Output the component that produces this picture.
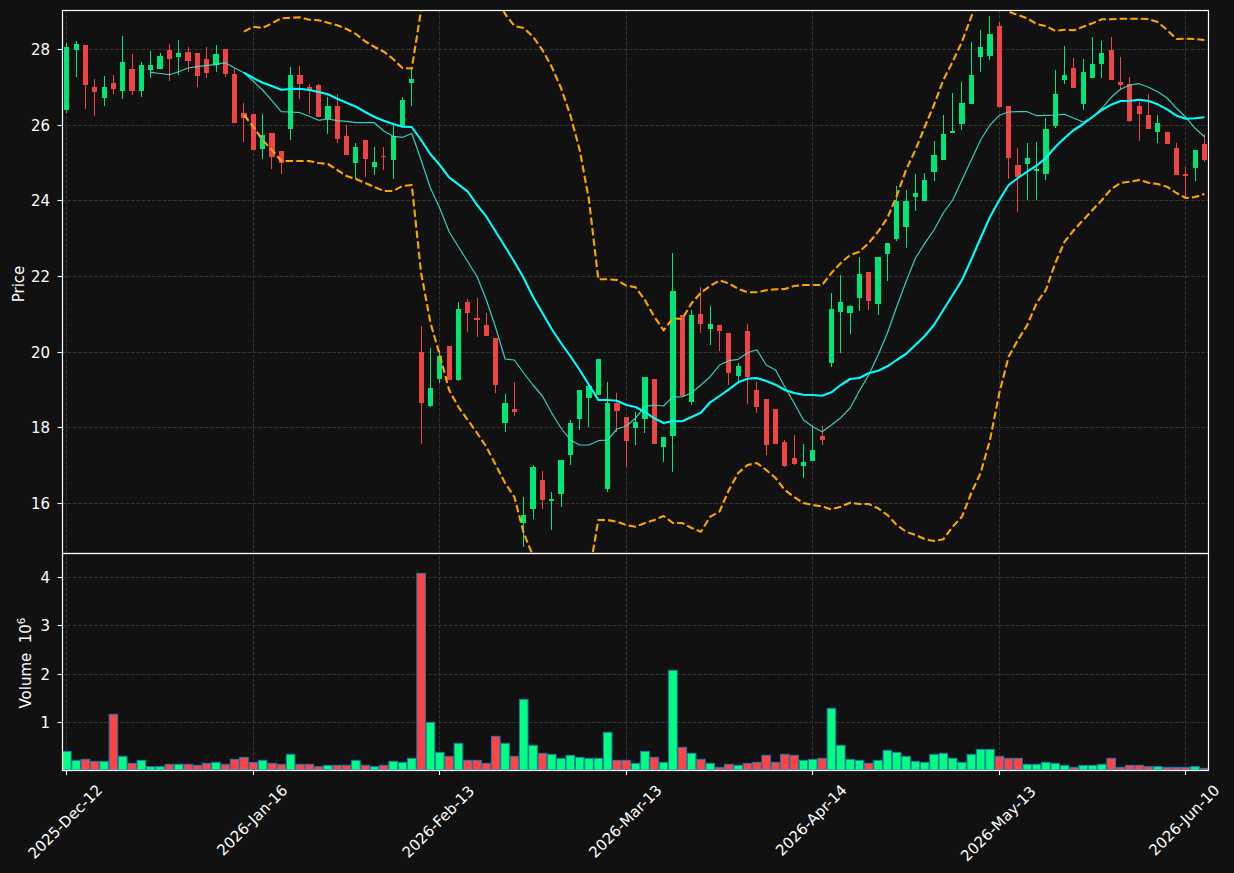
import React from 'react';

const X0 = 66.8;
const STEP = 9.325;
const GREEN = '#00e676';
const RED = '#ef4444';
const FONT = '"DejaVu Sans", sans-serif';

const cx = (i: number) => X0 + i * STEP;

// Everything below is read off in screen pixels: [wick top, body top, body bottom, wick bottom, up?]
type Candle = [number, number, number, number, 0 | 1];

const candles: Candle[] = [
  [42.7, 47, 110, 112.7, 1], [41.3, 44, 50, 76.7, 1], [45, 45, 85, 109.3, 0], [79.3, 87, 92, 115.7, 0],
  [76.3, 87, 98, 105.7, 1], [75.3, 83, 89, 93.7, 0], [36.3, 62, 91, 99.3, 1], [54.3, 69, 91, 94.7, 0],
  [62, 65, 91, 97.3, 1], [51, 65, 70, 78.3, 1], [53.3, 56, 69, 69.3, 1], [44.3, 50, 59, 80.7, 0],
  [40.3, 53, 57, 75.3, 1], [47.3, 52, 61, 71.7, 0], [53, 53, 76, 87.3, 0], [47, 59, 73, 78.3, 0],
  [45.3, 54, 65, 72.3, 1], [49, 49, 74, 77.3, 0], [69.3, 74, 123, 123, 0], [103.3, 113, 118, 142.3, 0],
  [114, 114, 150, 150, 0], [114.3, 135, 149, 159.3, 1], [133, 133, 157, 169.3, 0], [151, 151, 163, 174.3, 0],
  [67.3, 75, 129, 140.3, 1], [66, 75, 84, 98.7, 0], [84.3, 87, 90, 114, 0], [84, 85, 117, 117, 0],
  [97, 106, 119, 134.3, 1], [94, 106, 139, 143.3, 0], [125, 136, 155, 155, 0], [143.3, 147, 163, 179, 1],
  [140, 140, 159, 176.7, 0], [147.3, 162, 167, 175.3, 1], [147.3, 156, 157, 170.3, 0], [125, 136, 160, 179.3, 1],
  [96.7, 100, 126.7, 127, 1], [69, 79, 83, 106.3, 1], [326, 352, 403, 444, 0], [348.3, 388, 406, 406.7, 1],
  [350, 356, 379, 383, 1], [346, 346, 380, 380, 0], [302.3, 309, 380, 380.7, 1], [299.3, 302, 313, 332, 0],
  [298.3, 318, 320, 336.7, 0], [313.3, 325, 336, 336, 0], [338, 338, 385, 392.7, 0], [394.3, 403, 423, 432, 1],
  [382.3, 409, 412, 415.7, 0], [497.3, 515, 523, 547.3, 1], [465.3, 467, 509, 518.7, 1], [471, 480, 500, 508.7, 0],
  [492.3, 499, 501, 530.3, 1], [460, 460, 494, 506.7, 1], [420, 423, 455, 465.3, 1], [390, 390, 419, 430, 1],
  [383, 386, 398, 427.3, 1], [359, 359, 395, 395, 1], [382.3, 403, 489, 492.3, 1], [393.3, 403, 411, 432.3, 0],
  [417, 417, 441, 466.7, 0], [412.3, 422, 428, 445.3, 1], [377, 377, 419, 433.3, 1], [379, 379, 444, 444.3, 0],
  [437, 437, 447, 462.3, 1], [253, 291, 436, 471.7, 1], [315, 315, 396, 396, 0], [310.3, 315, 402, 405, 1],
  [287.3, 314, 324, 333.3, 0], [306, 324, 329, 344.7, 1], [325, 325, 331, 350.7, 0], [333, 333, 373, 385, 0],
  [362.7, 366, 376, 381.3, 1], [324, 331, 377, 404.3, 0], [382.3, 390, 407, 413.3, 0], [399, 399, 445, 455.3, 0],
  [409, 409, 444, 444, 0], [440.3, 442, 466, 466.7, 0], [435.3, 458, 464, 465.3, 0], [444, 462, 466, 478.3, 1],
  [427.3, 450, 461, 461, 1], [425.7, 436, 440, 445.3, 0], [293.3, 309, 363, 367.3, 1], [275.3, 302, 312, 352.7, 1],
  [305, 306, 313, 334.3, 1], [257.3, 274, 298, 310.7, 1], [272, 272, 301, 309.7, 0], [257, 257, 304, 315.3, 1],
  [243, 243, 254, 280.7, 1], [186.3, 201, 239, 240.7, 1], [189.7, 201, 227, 247.5, 1], [174, 193, 197, 210.7, 1],
  [173, 180, 201, 201, 1], [141, 155, 172, 181, 1], [115, 134, 160, 160, 1], [93, 131, 133, 133, 1],
  [82, 103, 124, 130, 1], [42, 75, 104, 104, 1], [30, 47, 57, 72, 1], [16, 34, 56, 60, 1],
  [22, 26, 107, 107, 0], [106, 106, 158, 179, 0], [148, 165, 177, 212, 0], [143, 158, 164, 200, 1],
  [142, 169, 171, 200, 1], [118, 129, 174, 180, 1], [70, 94, 126, 128, 1], [46, 75, 80, 84, 1],
  [58, 68, 88, 88, 0], [59, 72, 104, 110, 1], [37, 64, 78, 78, 1], [41, 53, 64, 78, 1],
  [37, 50, 80, 80, 0], [57, 82, 85, 90, 0], [77, 84, 121, 122, 0], [102, 106, 114, 141, 0],
  [94, 115, 129, 129, 0], [115, 123, 132, 143, 1], [132, 132, 144, 144, 0], [143.3, 148, 175, 157, 0],
  [166.7, 174, 176, 199, 0], [150, 150, 168, 181, 1], [134, 144, 160, 162, 0],
];

// bar top as read from the 3x crops, colour
const volumes: [number, 0 | 1][] = [
  [604, 1], [631, 1], [628, 0], [634, 0], [634, 1], [493, 0], [619, 1], [640, 0], [631, 1], [650, 1],
  [650, 1], [643, 0], [643, 1], [643, 0], [646, 0], [640, 0], [637, 1], [643, 0], [628, 0], [622, 0],
  [637, 0], [631, 1], [640, 0], [643, 0], [613, 1], [643, 0], [643, 0], [650, 0], [646, 1], [646, 0],
  [646, 0], [631, 1], [646, 0], [650, 1], [646, 0], [634, 1], [637, 1], [625, 1], [70, 0], [517, 1],
  [607, 1], [619, 0], [580, 1], [631, 0], [631, 0], [640, 0], [559, 0], [580, 1], [619, 0], [448, 1],
  [586, 1], [610, 0], [613, 1], [625, 1], [616, 1], [622, 1], [625, 1], [625, 1], [547, 1], [631, 0],
  [631, 0], [640, 1], [604, 1], [622, 0], [637, 1], [361, 1], [592, 0], [610, 1], [628, 0], [640, 1],
  [652, 0], [643, 0], [646, 1], [640, 0], [637, 0], [616, 0], [637, 0], [613, 0], [616, 0], [631, 1],
  [628, 1], [625, 0], [475, 1], [586, 1], [628, 1], [631, 1], [640, 0], [631, 1], [601, 1], [607, 1],
  [619, 1], [634, 1], [637, 1], [613, 1], [610, 1], [625, 1], [637, 1], [613, 1], [598, 1], [598, 1],
  [619, 0], [625, 0], [625, 0], [643, 1], [643, 1], [637, 1], [640, 1], [646, 1], [652, 0], [646, 1],
  [646, 1], [643, 1], [625, 0], [652, 0], [646, 0], [646, 0], [650, 0], [650, 1], [652, 0], [652, 0],
  [652, 0], [650, 1], [655, 0],
];

// Upper band, idx 19 onward (goes off the top of the axes around Feb and May)
const upper = [
  31.7, 26.7, 28, 23.3, 18.3, 17.7, 17.3, 19.7, 20.3, 22.7, 25.3, 29, 34, 41.3, 47, 51.7, 59, 68, 68.5,
  10, -50, -90, -110, -110, -100, -80, -50, -5, 14, 26, 28, 36.7, 50, 66.7, 88, 115, 150, 200, 279.3, 279.3,
  280, 285.7, 287.3, 300, 316.7, 330.3, 318.3, 319, 303.3, 292.7, 286, 280.3, 283.3, 289, 292.3, 292.3, 290.3,
  289.3, 289, 286, 285, 285, 285, 273, 263, 255, 251.7, 243, 231.7, 218, 196, 170, 150, 127, 105, 80, 61.7,
  41.7, 16.7, -10, -20, -10, 11.7, 15, 18.3, 24, 26, 31, 29.7, 30.3, 26.7, 23.3, 19.3, 19.3, 18.7, 18.7, 18.7, 19, 22,
  30, 39, 38.7, 39, 40,
];
const lower = [
  115, 126.7, 140, 150, 161, 161, 161, 161, 163, 164, 170, 176, 179, 183, 187, 191, 191, 186, 185, 273, 323, 355,
  390, 407, 420, 433, 447, 465, 483, 497, 533, 556, 590, 610, 620, 610, 590, 575, 520, 520, 521.7, 525, 526.7, 523, 520,
  516, 523, 523, 528, 531.7, 516.7, 511.7, 490, 473, 465, 463, 470, 478, 490, 497, 503, 505, 506.5, 509.3, 506.7,
  502.7, 504, 504, 508.3, 515, 525, 531.7, 535, 539, 541, 539.3, 526.7, 516.7, 493, 473, 440, 393, 356.7, 340, 325,
  303, 290, 263, 241.7, 230, 220, 210, 200, 189, 183, 181.7, 180, 182.7, 184, 186.7, 193, 198, 197, 194,
];
const slowMa = [
  72.7, 78, 82.7, 86, 89.7, 89, 88.7, 90, 92, 94.3, 98.7, 102.7, 106.7, 112, 117, 120.7, 124, 126.7, 127, 140,
  154.3, 165, 177.3, 184.3, 191.7, 205, 216.7, 231.7, 246.7, 261.7, 278, 296.7, 313, 329, 343, 356, 370, 385, 400, 400,
  400.7, 405, 407, 412, 418.3, 423, 421, 421.3, 417, 412.7, 402.3, 396, 389.3, 382.3, 378.7, 378, 381, 384.7, 390, 393,
  394.7, 395, 395.7, 392.3, 385, 379, 378, 373.3, 370.7, 366.3, 360, 354, 345, 336, 325, 310, 295, 280, 259.5, 238,
  217, 200, 185, 178, 171.7, 165.7, 158, 147, 138, 130, 124, 117, 110, 104.7, 101, 100.7, 99.7, 101, 104.3, 109.3,
  115.7, 118.7, 118.3, 117.3,
];
const fastMa = [
  72.3, 73.5, 74.7, 71.7, 68, 66.7, 65.3, 64.7, 62.7, 68, 72.7, 81.3, 90, 100.7, 111.7, 112, 112.7, 116.3, 120.3, 119,
  120.7, 121.3, 122.7, 122.7, 122.7, 131, 136.3, 137.3, 133.5, 160, 188.3, 208.3, 231.7, 246.7, 261.7, 276.7, 300, 328,
  359, 360, 373, 385, 396, 413, 428, 440, 445, 445, 440.7, 440, 429, 426, 418, 406.7, 405, 406, 396.7, 397, 392.7, 385,
  376.7, 365, 360.7, 359.3, 352.7, 349.7, 365, 370, 386.7, 403, 420, 426.7, 431.7, 425, 417.7, 408, 390.7, 375, 355,
  333, 306.7, 281.7, 258.3, 243.3, 230, 213, 200, 180, 160, 140, 125, 115.3, 112, 111.7, 111.7, 115.7, 115.3, 115,
  114.3, 118.3, 122, 117.3, 108.3, 97.3, 89.3, 85, 83.7, 87.3, 91.7, 98, 108.3, 117.3, 128.3, 136.7,
];

const poly = (ys: number[], start: number) => ys.map((y, i) => `${cx(start + i).toFixed(1)},${y}`).join(' ');

const gridXs = [66.5, 253.5, 439.5, 626.5, 812.5, 999.5, 1185.5];
const priceTicks: [string, number][] = [['16', 503.5], ['18', 427.5], ['20', 352.5], ['22', 276.5], ['24', 200.5], ['26', 125.5], ['28', 49.5]];
const volTicks: [string, number][] = [['1', 722.5], ['2', 674.5], ['3', 625.5], ['4', 577.5]];
const dates: [string, number, number][] = [
  ['2025-Dec-12', 66.5, 821.5],
  ['2026-Jan-16', 253.5, 820],
  ['2026-Feb-13', 439.5, 821.5],
  ['2026-Mar-13', 626.5, 821],
  ['2026-Apr-14', 812.5, 820],
  ['2026-May-13', 999.5, 823.5],
  ['2026-Jun-10', 1185.5, 820],
];

function Chart() {
  return (
    <svg width={1234} height={873} viewBox="0 0 1234 873" className="block" fontFamily={FONT} fill="#ffffff" fontSize={15}>
      <defs>
        <clipPath id="price-clip"><rect x={62} y={10} width={1146} height={543} /></clipPath>
        <clipPath id="vol-clip"><rect x={62} y={553} width={1146} height={217} /></clipPath>
      </defs>

      {/* grid */}
      <g stroke="#333333" strokeWidth={1} strokeDasharray="3.7 1.6">
        {gridXs.map((x) => <line key={x} x1={x} x2={x} y1={10} y2={770} />)}
        {[...priceTicks, ...volTicks].map(([, y]) => <line key={y} x1={62} x2={1208} y1={y} y2={y} />)}
      </g>

      {/* candles */}
      <g clipPath="url(#price-clip)" shapeRendering="crispEdges">
        {candles.map(([wt, bt, bb, wb, up], i) => {
          const c = cx(i);
          const color = up ? GREEN : RED;
          const left = Math.round(c - 2.6);
          return (
            <g key={i} fill={color}>
              <rect x={Math.floor(c)} y={wt} width={1} height={Math.max(wb, bb) - wt} />
              <rect x={left} y={bt} width={Math.round(c + 2.6) - left} height={bb - bt} />
            </g>
          );
        })}
      </g>

      {/* bands and averages */}
      <g clipPath="url(#price-clip)" fill="none" strokeLinejoin="round">
        <polyline points={poly(upper, 19)} stroke="#ffa500" strokeWidth={2.1} strokeDasharray="7.4 3.2" />
        <polyline points={poly(lower, 19)} stroke="#ffa500" strokeWidth={2.1} strokeDasharray="7.4 3.2" />
        <polyline points={poly(fastMa, 9)} stroke="#40e0d0" strokeOpacity={0.9} strokeWidth={1.2} />
        <polyline points={poly(slowMa, 19)} stroke="#00ffff" strokeWidth={2.1} />
      </g>

      {/* volume */}
      <g clipPath="url(#vol-clip)" stroke="#1f77b4" strokeWidth={1}>
        {volumes.map(([top, up], i) => {
          const y = 550 + top / 3;
          return <rect key={i} x={cx(i) - 4.3} y={y} width={8.6} height={770 - y} fill={up ? '#00ff7f' : '#ff4444'} />;
        })}
      </g>

      {/* spines */}
      <g fill="none" stroke="#ffffff" strokeWidth={1.2}>
        <rect x={62.5} y={10.5} width={1146} height={543} />
        <rect x={62.5} y={553.5} width={1146} height={217} />
      </g>

      {/* ticks */}
      <g stroke="#ffffff" strokeWidth={1.1}>
        {[...priceTicks, ...volTicks].map(([, y]) => <line key={y} x1={57.5} x2={62} y1={y} y2={y} />)}
        {gridXs.map((x) => <line key={x} x1={x} x2={x} y1={770} y2={775} />)}
      </g>

      {[...priceTicks, ...volTicks].map(([t, y]) => (
        <text key={y} x={50} y={y + 5.5} textAnchor="end">{t}</text>
      ))}

      <text transform="translate(23.5 284) rotate(-90)" textAnchor="middle">Price</text>
      <text transform="translate(31 663) rotate(-90)" textAnchor="middle">
        Volume{'\u00a0\u00a0'}10<tspan dy={-6} fontSize={10.5}>6</tspan>
      </text>

      {dates.map(([label, x, y]) => (
        <text key={label} transform={`translate(${x - 1.5} ${y}) rotate(-45)`} textAnchor="middle" dy={5.5}>{label}</text>
      ))}
    </svg>
  );
}

export default function App() {
  return (
    <div className="h-[873px] w-[1234px] overflow-hidden bg-[#111111]">
      <Chart />
    </div>
  );
}
